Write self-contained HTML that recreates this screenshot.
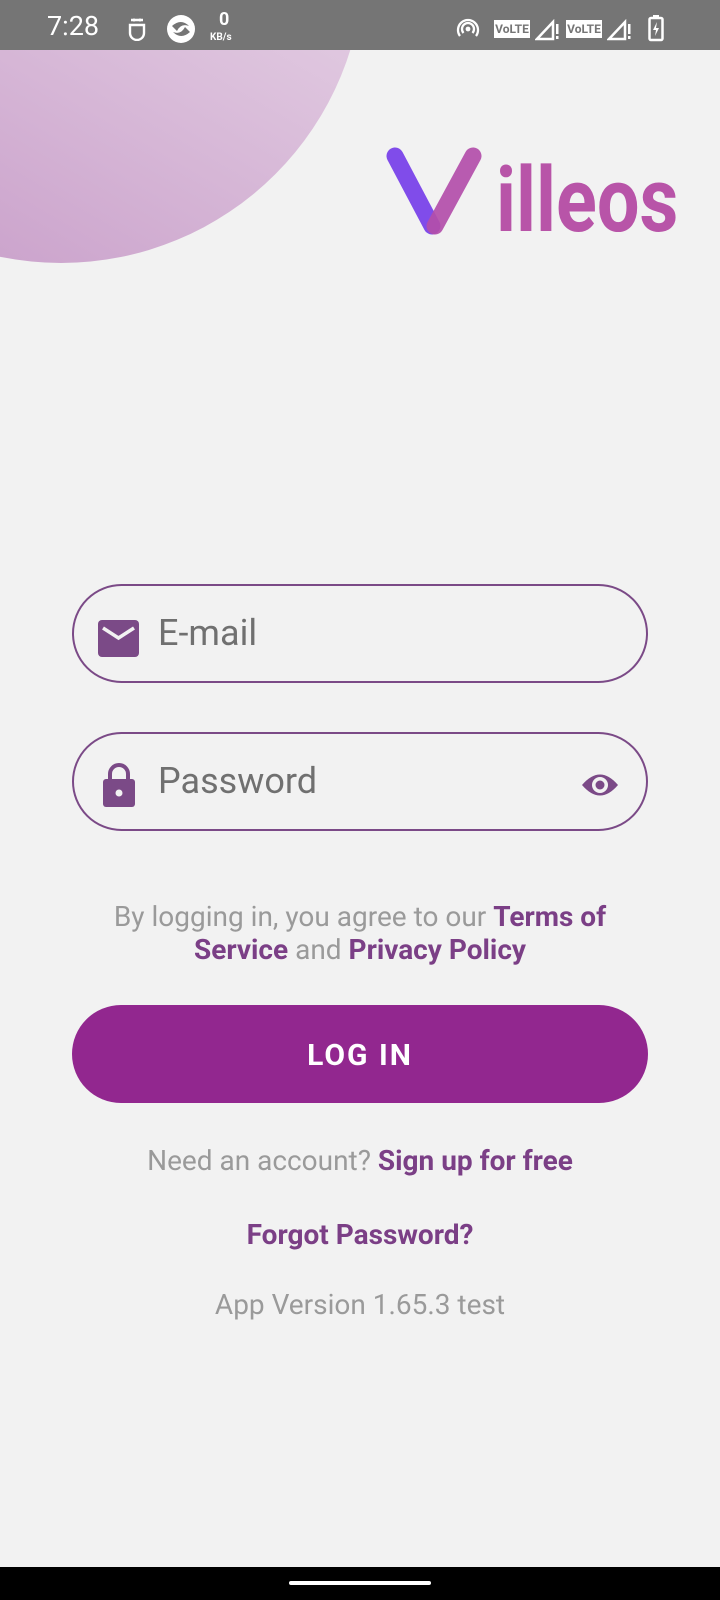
<!DOCTYPE html>
<html><head><meta charset="utf-8"><style>
*{margin:0;padding:0;box-sizing:border-box}
body{width:720px;height:1600px;background:#f2f2f2;position:relative;overflow:hidden;font-family:"Roboto","Liberation Sans",sans-serif}
.sb{position:absolute;left:0;top:0;width:720px;height:50px;background:#757575;color:#fff;z-index:3}
.circle{position:absolute;left:-242px;top:-343px;width:606px;height:606px;border-radius:50%;background:linear-gradient(30deg,#c598c6 0%,#dcc1dc 50%,#f1e6f1 100%)}
.field{position:absolute;left:72px;width:576px;height:99px;border:2px solid #7b4a87;border-radius:50px}
.ph{position:absolute;left:84px;top:26px;font-size:36px;color:#707070}
.c{position:absolute;left:0;width:720px;text-align:center}
b{color:#7b3f86}
</style></head><body>
<div class="circle"></div>
<div class="sb">
<div style="position:absolute;left:47px;top:10px;font-size:27px">7:28</div>
<svg style="position:absolute;left:127px;top:17px" width="20" height="24" viewBox="0 0 20 24"><path d="M4 3h12M3 8h14v8a7 7 0 0 1-14 0z" stroke="#fff" stroke-width="2.4" fill="none"/><circle cx="7" cy="3" r="1.5" fill="#fff"/><circle cx="13" cy="3" r="1.5" fill="#fff"/></svg>
<svg style="position:absolute;left:166px;top:14px" width="30" height="30" viewBox="0 0 30 30"><circle cx="15" cy="15" r="14" fill="#fff"/><path d="M6 12q9-8 17 0q-8-3-12 5z M24 18q-9 8-17 0q8 3 12-5z" fill="#757575"/></svg>
<div style="position:absolute;left:219px;top:9px;font-size:18px;font-weight:bold">0</div>
<div style="position:absolute;left:210px;top:32px;font-size:10px;font-weight:bold">KB/s</div>
<svg style="position:absolute;left:455px;top:18px" width="26" height="22" viewBox="0 0 26 22"><path d="M5 18a10 10 0 1 1 16 0M8.5 15a6 6 0 1 1 9 0" stroke="#fff" stroke-width="2.3" fill="none"/><circle cx="13" cy="11" r="2.4" fill="#fff"/></svg>
<div style="position:absolute;left:494px;top:20px;width:36px;height:18px;background:#fff;color:#757575;font-size:12px;font-weight:bold;line-height:18px;text-align:center">VoLTE</div>
<svg style="position:absolute;left:535px;top:19px" width="25" height="22" viewBox="0 0 25 22"><path d="M2 20L18 3v17z" fill="none" stroke="#fff" stroke-width="2.5"/><rect x="21" y="5" width="2.5" height="10" fill="#fff"/><rect x="21" y="17" width="2.5" height="3" fill="#fff"/></svg>
<div style="position:absolute;left:566px;top:20px;width:36px;height:18px;background:#fff;color:#757575;font-size:12px;font-weight:bold;line-height:18px;text-align:center">VoLTE</div>
<svg style="position:absolute;left:607px;top:19px" width="25" height="22" viewBox="0 0 25 22"><path d="M2 20L18 3v17z" fill="none" stroke="#fff" stroke-width="2.5"/><rect x="21" y="5" width="2.5" height="10" fill="#fff"/><rect x="21" y="17" width="2.5" height="3" fill="#fff"/></svg>
<svg style="position:absolute;left:648px;top:14px" width="16" height="28" viewBox="0 0 16 28"><rect x="1.5" y="4" width="13" height="22" rx="1.5" fill="none" stroke="#fff" stroke-width="2.5"/><rect x="5" y="1" width="6" height="3" fill="#fff"/><path d="M9 8l-4 8h3l-1 6 4-8h-3z" fill="#fff"/></svg>
</div>
<svg style="position:absolute;left:385px;top:146px" width="100" height="90" viewBox="0 0 100 90"><path d="M10 10L47 80" stroke="#7a44ea" stroke-width="17" stroke-linecap="round" opacity="0.95"/><path d="M88 10L50 80" stroke="#b44fab" stroke-width="17" stroke-linecap="round" opacity="0.92"/></svg>
<div style="position:absolute;left:496px;top:142px;font-size:90px;line-height:117px;font-weight:bold;color:#b854a8;transform:scaleX(.84);transform-origin:left top">illeos</div>
<div class="field" style="top:584px">
<svg style="position:absolute;left:24px;top:34px" width="41" height="37" viewBox="0 0 41 37"><rect width="41" height="37" rx="4" fill="#7b4a87"/><path d="M5 8l15.5 10L36 8" stroke="#f2f2f2" stroke-width="3.5" fill="none"/></svg>
<div class="ph">E-mail</div></div>
<div class="field" style="top:732px">
<svg style="position:absolute;left:28px;top:26px" width="34" height="48" viewBox="0 0 34 48"><path d="M8 20v-6a9 9 0 0 1 18 0v6" stroke="#7b4a87" stroke-width="4" fill="none"/><rect x="1" y="19" width="32" height="28" rx="3" fill="#7b4a87"/><circle cx="17" cy="33" r="3.5" fill="#f2f2f2"/></svg>
<div class="ph">Password</div>
<svg style="position:absolute;left:507px;top:38px" width="38" height="26" viewBox="0 0 38 26"><path d="M1 13Q19-8 37 13Q19 34 1 13z" fill="#7b4a87"/><circle cx="19" cy="13" r="8" fill="#f2f2f2"/><circle cx="19" cy="13" r="4.5" fill="#7b4a87"/></svg>
</div>
<div class="c" style="top:900px;font-size:28px;line-height:33px;color:#9a9a9a">By logging in, you agree to our <b>Terms of</b><br><b>Service</b> and <b>Privacy Policy</b></div>
<div style="position:absolute;left:72px;top:1005px;width:576px;height:98px;border-radius:49px;background:#92278f;color:#fff;font-size:30px;font-weight:bold;letter-spacing:2px;text-align:center;line-height:102px">LOG IN</div>
<div class="c" style="top:1144px;font-size:28px;color:#9a9a9a">Need an account? <b>Sign up for free</b></div>
<div class="c" style="top:1218px;font-size:28px"><b>Forgot Password?</b></div>
<div class="c" style="top:1288px;font-size:28px;color:#9a9a9a">App Version 1.65.3 test</div>
<div style="position:absolute;left:0;top:1567px;width:720px;height:33px;background:#000"></div>
<div style="position:absolute;left:289px;top:1581px;width:142px;height:4px;border-radius:2px;background:#fff"></div>
</body></html>
